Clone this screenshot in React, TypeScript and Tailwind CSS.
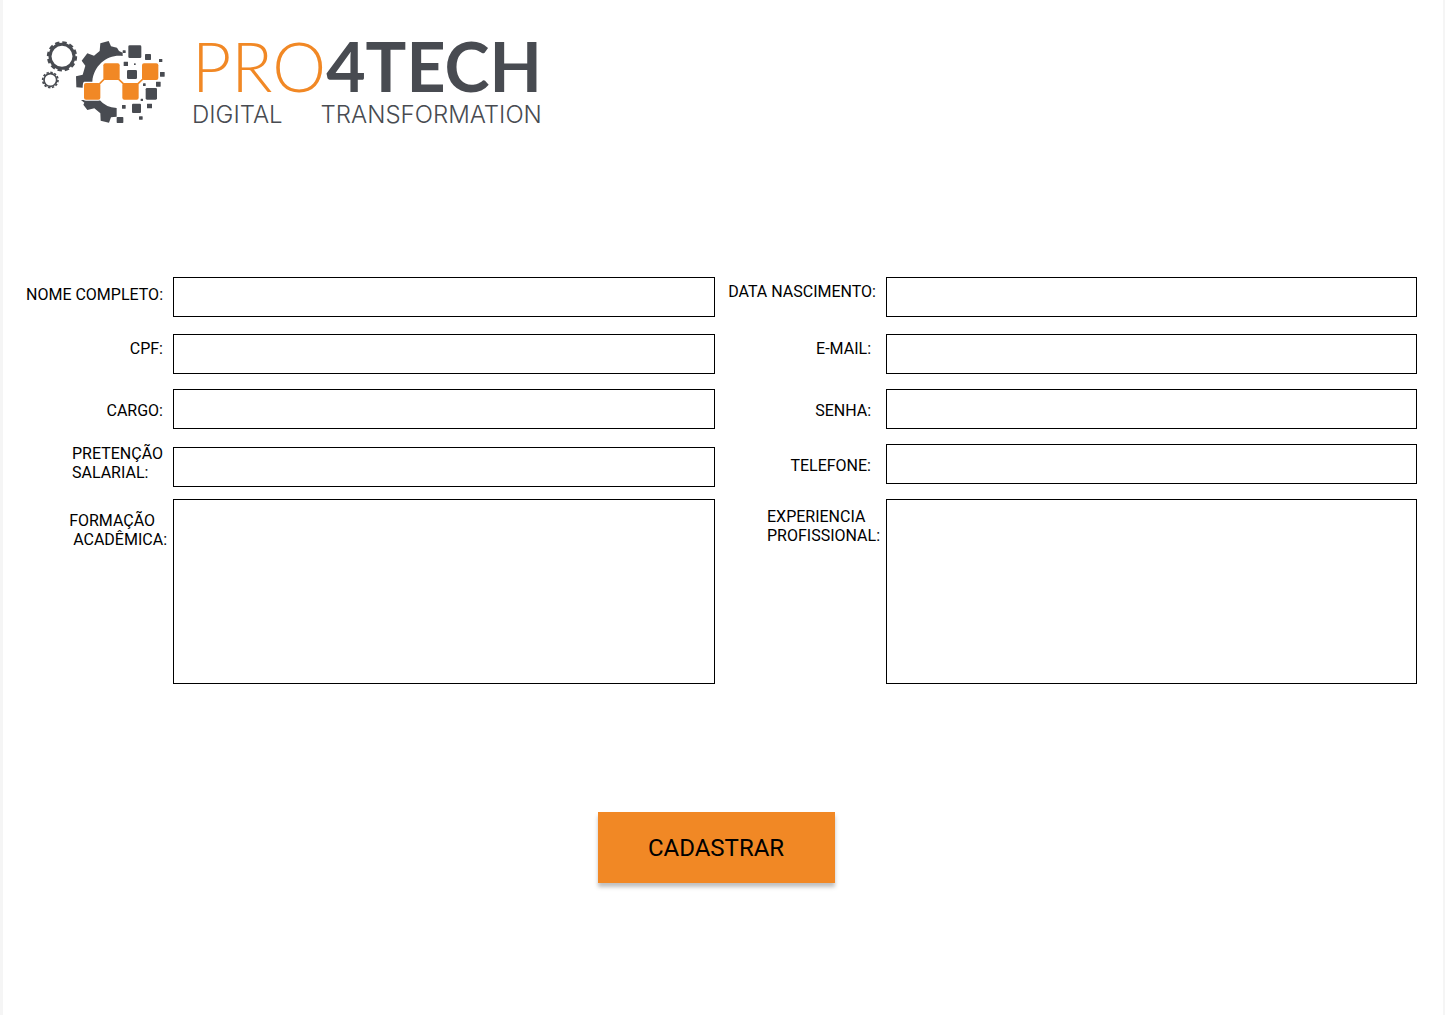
import type { ReactNode } from "react";

const GRAY_SQUARES: number[][] = [
  [295, 46, 39, 38, 4],
  [345, 72, 18, 18, 2],
  [387, 87, 10, 9, 1],
  [278, 61, 9, 8, 1],
  [281, 95, 13, 13, 1],
  [312, 100, 5, 5, 1],
  [291, 120, 30, 27, 4],
  [390, 126, 14, 14, 1],
  [378, 155, 14, 15, 1],
  [339, 160, 8, 8, 1],
  [347, 174, 34, 35, 4],
  [332, 206, 7, 7, 1],
  [276, 225, 11, 11, 1],
  [306, 221, 27, 28, 3],
  [351, 221, 15, 14, 1],
  [260, 261, 20, 18, 2],
  [327, 259, 11, 10, 1],
];

const ORANGE_SQUARES = [
  [162, 159],
  [220, 100],
  [277, 159],
  [336, 100],
];

function LogoMark() {
  return (
    <svg viewBox="30 30 384 255" className="h-[85px] w-32 shrink-0" aria-hidden="true">
      <g fill="none" stroke="#484b51">
        <circle cx="96" cy="79" r="36" strokeWidth="9" />
        <circle cx="96" cy="79" r="42" strokeWidth="7" pathLength="120" strokeDasharray="6 4" />
        <circle cx="61" cy="150" r="19" strokeWidth="5" />
        <circle cx="61" cy="150" r="23" strokeWidth="5" pathLength="120" strokeDasharray="6 4" />
      </g>
      <g fill="#484b51">
        <path d="M211 40 236 33 243 49 261 53 267 63 278 68V78C235 72 191 104 187 155H163Q158 156 158 173L139 172 138 139 158 134 166 107 155 92 172 70 192 77 209 63Z" />
        <path d="M153 210H209Q227 232 260 234V260L243 262 237 278 212 272 211 250 193 235 172 240 160 224 163 218Z" />
        {GRAY_SQUARES.map(([x, y, w, h, r]) => (
          <rect key={`${x}-${y}`} x={x} y={y} width={w} height={h} rx={r} />
        ))}
      </g>
      <path d="M206 164 226 144M264 146 283 164M321 164 342 144" stroke="#fff" strokeWidth="11" />
      {ORANGE_SQUARES.map(([x, y]) => (
        <rect key={x} x={x} y={y} width="49" height="50" rx="6" fill="#f18825" stroke="#fff" strokeWidth="6" paintOrder="stroke" />
      ))}
      <path d="M206 164 226 144M264 146 283 164M321 164 342 144" stroke="#f18825" strokeWidth="5" />
    </svg>
  );
}

function Label({ htmlFor, className, children }: { htmlFor: string; className: string; children: ReactNode }) {
  return (
    <label htmlFor={htmlFor} className={`justify-self-end whitespace-nowrap ${className}`}>
      {children}
    </label>
  );
}

const FIELD = "block w-full border border-black bg-white px-2 outline-none focus:ring-1 focus:ring-[#f18825]";

export default function App() {
  return (
    <div className="min-h-screen border-l-[3px] border-r-2 border-[#f5f5f5] bg-white font-['Roboto',sans-serif] text-base leading-[19px] text-black">
      <header className="flex items-start gap-6 pl-[37px] pt-10">
        <LogoMark />
        <div className="text-[#484b51]">
          <div className="whitespace-nowrap font-['Lato',sans-serif] text-[68px] leading-[52px]">
            <span className="font-light text-[#f18825]">PRO</span>
            <span className="font-bold">4TECH</span>
          </div>
          <div className="mt-3 flex justify-between font-['Inter',sans-serif] text-[24px] font-light leading-[22px]">
            <span>DIGITAL</span> <span>TRANSFORMATION</span>
          </div>
        </div>
      </header>

      <form className="pb-[130px] pt-[151px]" onSubmit={(e) => e.preventDefault()}>
        <div className="grid grid-cols-[170px_542fr_171px_531fr] gap-y-[15px] pr-[26px]">
          <Label htmlFor="nome" className="pr-[10px] pt-2">NOME COMPLETO:</Label>
          <input id="nome" type="text" className={`${FIELD} mb-[2px] h-10`} />
          <Label htmlFor="nascimento" className="pr-[10px] pt-[5px]">DATA NASCIMENTO:</Label>
          <input id="nascimento" type="text" className={`${FIELD} mb-[2px] h-10`} />

          <Label htmlFor="cpf" className="pr-[10px] pt-[5px]">CPF:</Label>
          <input id="cpf" type="text" className={`${FIELD} h-10`} />
          <Label htmlFor="email" className="pr-[15px] pt-[5px]">E-MAIL:</Label>
          <input id="email" type="email" className={`${FIELD} h-10`} />

          <Label htmlFor="cargo" className="pr-[10px] pt-3">CARGO:</Label>
          <input id="cargo" type="text" className={`${FIELD} h-10`} />
          <Label htmlFor="senha" className="pr-[15px] pt-3">SENHA:</Label>
          <input id="senha" type="password" className={`${FIELD} h-10`} />

          <Label htmlFor="salario" className="pr-[10px]">
            PRETENÇÃO
            <br />
            SALARIAL:
          </Label>
          <input id="salario" type="text" className={`${FIELD} -mb-[3px] mt-[3px] h-10`} />
          <Label htmlFor="telefone" className="pr-[15px] pt-3">TELEFONE:</Label>
          <input id="telefone" type="tel" className={`${FIELD} h-10`} />

          <Label htmlFor="formacao" className="pr-[6px] pt-3">
            FORMAÇÃO
            <br />
            <span className="pl-1">ACADÊMICA:</span>
          </Label>
          <textarea id="formacao" className={`${FIELD} h-[185px] resize-none`} />
          <Label htmlFor="experiencia" className="pr-[6px] pt-2">
            EXPERIENCIA
            <br />
            PROFISSIONAL:
          </Label>
          <textarea id="experiencia" className={`${FIELD} h-[185px] resize-none`} />
        </div>
        <div className="mt-32 flex justify-center pr-[14px]">
          <button type="submit" className="h-[71px] w-[237px] bg-[#f18825] text-2xl shadow-[0_4px_4px_rgba(0,0,0,0.25)]">
            CADASTRAR
          </button>
        </div>
      </form>
    </div>
  );
}
